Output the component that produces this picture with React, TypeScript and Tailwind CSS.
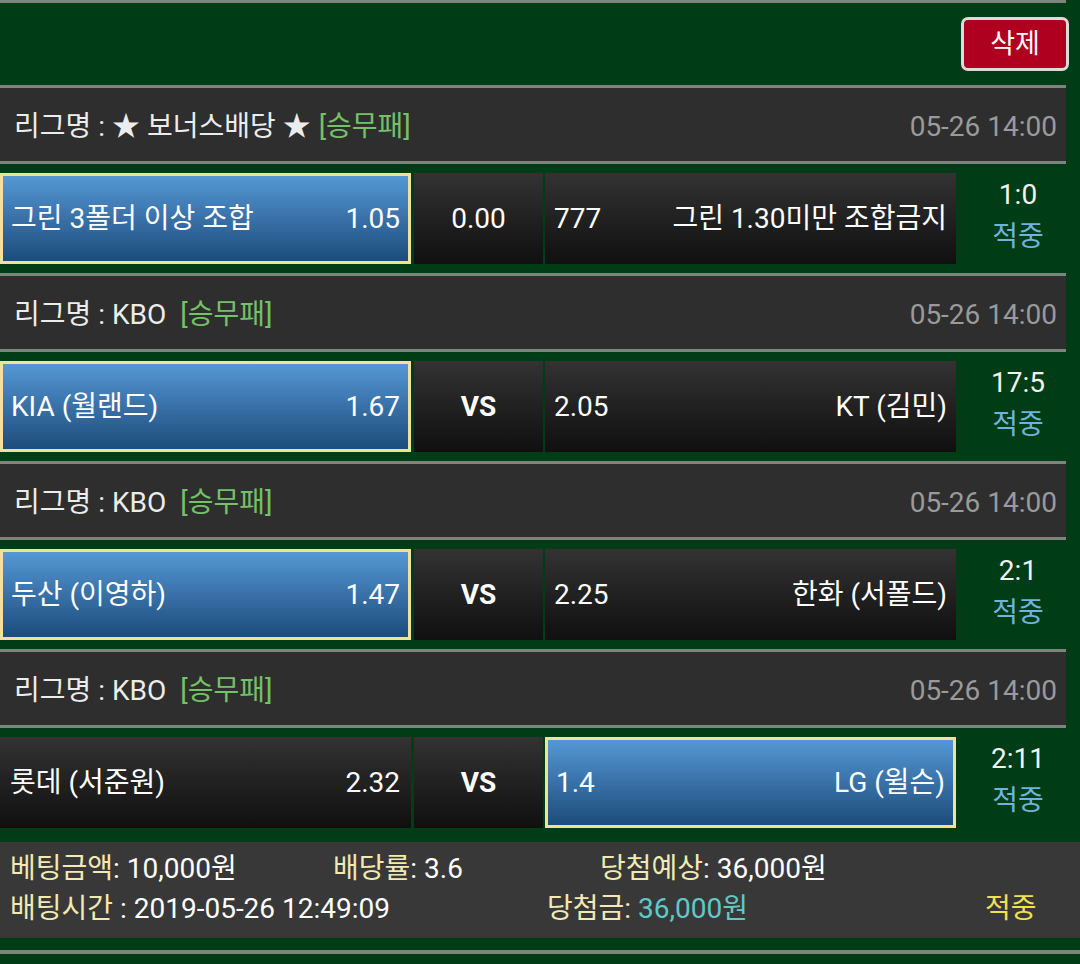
import React from 'react'

type Game = {
  league: string
  type: string
  wide?: boolean
  date: string
  home: string
  homeOdds: string
  mid: string
  midBold?: boolean
  awayOdds: string
  away: string
  pick: 'home' | 'away'
  score: string
}

const games: Game[] = [
  {
    league: '★ 보너스배당 ★',
    type: '[승무패]',
    date: '05-26 14:00',
    home: '그린 3폴더 이상 조합',
    homeOdds: '1.05',
    mid: '0.00',
    awayOdds: '777',
    away: '그린 1.30미만 조합금지',
    pick: 'home',
    score: '1:0',
  },
  {
    league: 'KBO',
    type: '[승무패]',
    wide: true,
    date: '05-26 14:00',
    home: 'KIA (월랜드)',
    homeOdds: '1.67',
    mid: 'VS',
    midBold: true,
    awayOdds: '2.05',
    away: 'KT (김민)',
    pick: 'home',
    score: '17:5',
  },
  {
    league: 'KBO',
    type: '[승무패]',
    wide: true,
    date: '05-26 14:00',
    home: '두산 (이영하)',
    homeOdds: '1.47',
    mid: 'VS',
    midBold: true,
    awayOdds: '2.25',
    away: '한화 (서폴드)',
    pick: 'home',
    score: '2:1',
  },
  {
    league: 'KBO',
    type: '[승무패]',
    wide: true,
    date: '05-26 14:00',
    home: '롯데 (서준원)',
    homeOdds: '2.32',
    mid: 'VS',
    midBold: true,
    awayOdds: '1.4',
    away: 'LG (윌슨)',
    pick: 'away',
    score: '2:11',
  },
]

const picked = 'bg-gradient-to-b from-[#5598d5] to-[#1d4c7c] border-[3px] border-[#f1e19a]'
const plain = 'bg-gradient-to-b from-[#333333] to-[#101010]'

function GameBlock({ game }: { game: Game }) {
  return (
    <div>
      {/* League header */}
      <div className="w-[1066px] h-[79px] border-y-[3px] border-[#7b857b] bg-[#2e2e2e] flex items-center justify-between pl-[14px] pr-[9px] pt-[5px]">
        <div className="text-[#ececec]">
          리그명 : {game.league}
          <span className={game.wide ? 'ml-[14px] text-[#74c266]' : 'ml-[8px] text-[#74c266]'}>{game.type}</span>
        </div>
        <div className="text-[#9a9a9a]">{game.date}</div>
      </div>

      {/* Match row */}
      <div className="flex items-stretch h-[109px] pt-[9px] pb-[9px]">
        <div
          className={`w-[411px] h-[91px] flex items-center justify-between text-white ${
            game.pick === 'home' ? `${picked} pl-[8px] pr-[8px]` : `${plain} pl-[10px] pr-[11px]`
          }`}
        >
          <span>{game.home}</span>
          <span>{game.homeOdds}</span>
        </div>
        <div
          className={`ml-[3px] w-[129px] h-[91px] flex items-center justify-center text-white ${plain} ${
            game.midBold ? 'font-bold' : ''
          }`}
        >
          {game.mid}
        </div>
        <div
          className={`ml-[2px] w-[411px] h-[91px] flex items-center justify-between text-white ${
            game.pick === 'away' ? `${picked} pl-[8px] pr-[8px]` : `${plain} pl-[9px] pr-[9px]`
          }`}
        >
          <span>{game.awayOdds}</span>
          <span>{game.away}</span>
        </div>
        <div className="flex-1 h-[91px] flex flex-col items-center justify-center leading-[42px] pb-[5px]">
          <span className="text-[#f2f2f2]">{game.score}</span>
          <span className="text-[#6cb4dc]">적중</span>
        </div>
      </div>
    </div>
  )
}

export default function App() {
  return (
    <div
      className="w-[1080px] h-[964px] overflow-hidden bg-[#003c15] text-[28px] leading-none"
      style={{ fontFamily: "Roboto, 'Noto Sans CJK KR', 'Noto Sans', sans-serif" }}
    >
      <div className="w-[1066px] h-[3px] bg-[#7b857b]" />
      <div className="h-[82px] flex justify-end items-start pt-[14px] pr-[11px]">
        <button className="w-[108px] h-[54px] rounded-[7px] border-[3px] border-[#dcdcdc] bg-[#b0001f] text-white text-[27px]">
          삭제
        </button>
      </div>

      {games.map((g, i) => (
        <GameBlock key={i} game={g} />
      ))}

      {/* Summary */}
      <div className="mt-[5px] h-[96px] bg-[#383838] flex flex-col justify-center pl-[10px] leading-[40px] pb-[2px]">
        <div className="flex">
          <div className="w-[323px]">
            <span className="text-[#f2eab0]">베팅금액</span>
            <span className="text-white">: 10,000원</span>
          </div>
          <div className="w-[267px]">
            <span className="text-[#f2eab0]">배당률</span>
            <span className="text-white">: 3.6</span>
          </div>
          <div>
            <span className="text-[#f2eab0]">당첨예상</span>
            <span className="text-white">: 36,000원</span>
          </div>
        </div>
        <div className="flex">
          <div className="w-[537px] text-white">
            <span className="text-[#f2eab0]">배팅시간</span> : 2019-05-26 12:49:09
          </div>
          <div className="w-[438px]">
            <span className="text-[#f2eab0]">당첨금</span>
            <span className="text-[#f2eab0]">: </span>
            <span className="text-[#5fc9c9]">36,000원</span>
          </div>
          <div className="text-[#f1e04f]">적중</div>
        </div>
      </div>
      <div className="mt-[12px] h-[4px] bg-[#7b857b]" />
    </div>
  )
}
